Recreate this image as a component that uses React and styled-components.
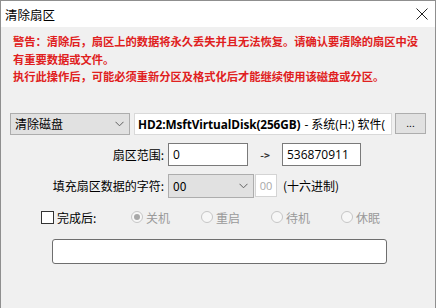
import React from 'react';
import styled, { createGlobalStyle } from 'styled-components';

const GlobalStyle = createGlobalStyle`
  html, body {
    margin: 0;
    padding: 0;
    background: #fff;
  }
  body {
    font-family: "Noto Sans CJK SC", "Noto Sans", sans-serif;
    font-size: 12px;
    color: #000;
  }
`;

const Window = styled.div`
  box-sizing: border-box;
  width: 436px;
  height: 308px;
  border: 1px solid #8f8f8f;
  border-bottom: none;
  display: flex;
  flex-direction: column;
  background: #f0f0f0;
  overflow: hidden;
`;

const TitleBar = styled.div`
  height: 26px;
  flex: none;
  background: #fff;
  display: flex;
  align-items: center;
  justify-content: space-between;
  padding: 0 7px 0 4px;
`;

const Title = styled.span`
  font-size: 12.5px;
  color: #000;
`;

const Body = styled.div`
  flex: 1;
  padding: 6px 8px 0 9px;
  display: flex;
  flex-direction: column;
`;

const Warning = styled.p`
  margin: 0 0 0 3px;
  color: #e02020;
  font-weight: bold;
  font-size: 11.3px;
  line-height: 17.5px;
  letter-spacing: -0.05px;
`;

const Row = styled.div`
  display: flex;
  align-items: center;
  margin-top: ${p => p.$top || 0}px;
  padding-left: ${p => p.$indent || 0}px;
`;

const Combo = styled.div`
  box-sizing: border-box;
  width: ${p => p.$w}px;
  height: ${p => p.$h || 22}px;
  background: #e1e1e1;
  border: 1px solid #adadad;
  display: flex;
  align-items: center;
  justify-content: space-between;
  padding: 0 5px 0 4px;
  font-size: 12px;
`;

const DiskBox = styled.div`
  box-sizing: border-box;
  width: 258px;
  height: 22px;
  margin-left: 4px;
  background: #fff;
  border: 1px solid #d9d9d9;
  padding: 0 3px;
  display: flex;
  align-items: center;
  white-space: nowrap;
  overflow: hidden;
  font-size: 12px;
`;

const Bold = styled.b`
  font-family: "Open Sans", "Noto Sans CJK SC", sans-serif;
  font-weight: 700;
  font-size: 11.8px;
  letter-spacing: -0.1px;
`;

const Plain = styled.span`
  font-family: "Open Sans", "Noto Sans CJK SC", sans-serif;
  margin-left: 4px;
`;

const DotsButton = styled.div`
  box-sizing: border-box;
  width: 31px;
  height: 21px;
  margin-left: 3px;
  background: #e1e1e1;
  border: 1px solid #adadad;
  display: flex;
  align-items: center;
  justify-content: center;
  font-size: 10px;
  padding-bottom: 3px;
`;

const Label = styled.span`
  width: 154px;
  text-align: right;
  flex: none;
  margin-right: 4px;
  font-size: 12px;
`;

const TextBox = styled.div`
  box-sizing: border-box;
  width: ${p => p.$w}px;
  height: 23px;
  background: #fff;
  border: 1px solid #7a7a7a;
  display: flex;
  align-items: center;
  padding-left: 4px;
  font-family: "Open Sans", "Noto Sans CJK SC", sans-serif;
  font-size: 12px;
`;

const Arrow = styled.span`
  width: 34px;
  text-align: center;
  font-size: 10px;
  font-weight: bold;
  color: #333;
`;

const SmallBox = styled.div`
  box-sizing: border-box;
  width: 22px;
  height: 23px;
  margin-left: 1px;
  background: #fff;
  border: 1px solid #d4d4d4;
  color: #a8a8a8;
  display: flex;
  align-items: center;
  justify-content: center;
  font-family: "Open Sans", sans-serif;
  font-size: 11px;
`;

const Hint = styled.span`
  margin-left: 6px;
  font-size: 12px;
`;

const CheckBox = styled.span`
  box-sizing: border-box;
  width: 13px;
  height: 13px;
  border: 1px solid #333;
  background: #fff;
  flex: none;
`;

const CheckLabel = styled.span`
  margin-left: 3px;
  width: 74px;
  font-size: 12px;
`;

const Radio = styled.label`
  display: flex;
  align-items: center;
  width: 70px;
  color: #9a9a9a;
  font-size: 12px;
`;

const RadioDot = styled.span`
  box-sizing: border-box;
  width: 12px;
  height: 12px;
  border-radius: 50%;
  border: 1px solid #c6c6c6;
  background: #f7f7f7;
  margin-right: 3px;
  display: flex;
  align-items: center;
  justify-content: center;
  &::after {
    content: '';
    width: 6px;
    height: 6px;
    border-radius: 50%;
    background: ${p => (p.$on ? '#a8a8a8' : 'transparent')};
  }
`;

const Progress = styled.div`
  box-sizing: border-box;
  width: 335px;
  height: 25px;
  margin: 13px 0 0 42px;
  background: #fff;
  border: 1px solid #6e6e6e;
  border-radius: 3px;
`;

const Chevron = () => (
  <svg width="9" height="6" viewBox="0 0 9 6">
    <polyline points="0.5,0.8 4.5,4.8 8.5,0.8" fill="none" stroke="#606060" strokeWidth="1" />
  </svg>
);

const CloseIcon = () => (
  <svg width="12" height="12" viewBox="0 0 12 12">
    <path d="M0.5 0.5 L11.5 11.5 M11.5 0.5 L0.5 11.5" stroke="#222" strokeWidth="1" />
  </svg>
);

const radios = [
  { label: '关机', on: true },
  { label: '重启' },
  { label: '待机' },
  { label: '休眠' }
];

export default function App() {
  return (
    <>
      <GlobalStyle />
      <Window>
        <TitleBar>
          <Title>清除扇区</Title>
          <CloseIcon />
        </TitleBar>
        <Body>
          <Warning>
            警告：清除后，扇区上的数据将永久丢失并且无法恢复。请确认要清除的扇区中没
            <br />
            有重要数据或文件。
            <br />
            执行此操作后，可能必须重新分区及格式化后才能继续使用该磁盘或分区。
          </Warning>

          <Row $top={27}>
            <Combo $w={120}>
              清除磁盘
              <Chevron />
            </Combo>
            <DiskBox>
              <Bold>HD2:MsftVirtualDisk(256GB)</Bold>
              <Plain>- 系统(H:) 软件(</Plain>
            </DiskBox>
            <DotsButton>...</DotsButton>
          </Row>

          <Row $top={8}>
            <Label>扇区范围:</Label>
            <TextBox $w={80}>0</TextBox>
            <Arrow>-&gt;</Arrow>
            <TextBox $w={79}>536870911</TextBox>
          </Row>

          <Row $top={8}>
            <Label>填充扇区数据的字符:</Label>
            <Combo $w={86} $h={24}>
              00
              <Chevron />
            </Combo>
            <SmallBox>00</SmallBox>
            <Hint>(十六进制)</Hint>
          </Row>

          <Row $top={11} $indent={31}>
            <CheckBox />
            <CheckLabel>完成后:</CheckLabel>
            {radios.map(r => (
              <Radio key={r.label}>
                <RadioDot $on={r.on} />
                {r.label}
              </Radio>
            ))}
          </Row>

          <Progress />
        </Body>
      </Window>
    </>
  );
}
